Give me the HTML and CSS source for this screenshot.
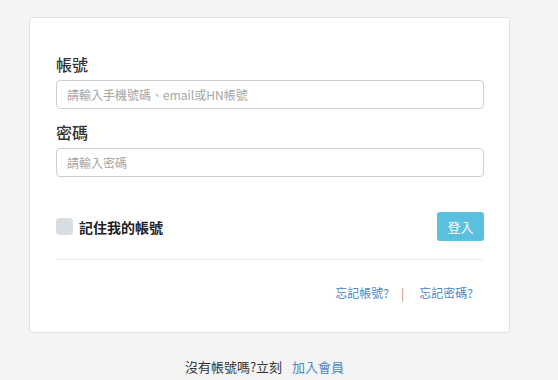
FILE: index.html
```html
<!DOCTYPE html>
<html lang="zh-Hant">
<head>
  <meta charset="UTF-8">
  <meta name="viewport" content="width=device-width, initial-scale=1.0">
  <title>會員登入</title>
  <link rel="stylesheet" href="styles.css">
</head>
<body>
  <div class="wrap">
    <form class="login-card">
      <label class="field-label" for="account">帳號</label>
      <input class="field-input" id="account" type="text" placeholder="請輸入手機號碼、email或HN帳號">

      <label class="field-label" for="password">密碼</label>
      <input class="field-input" id="password" type="password" placeholder="請輸入密碼">

      <div class="remember-row">
        <label class="remember">
          <span class="check-box"></span>
          <span class="remember-text">記住我的帳號</span>
        </label>
        <button class="btn-login" type="button">登入</button>
      </div>

      <div class="divider"></div>

      <div class="forgot">
        <a href="#">忘記帳號?</a>
        <span class="sep">|</span>
        <a href="#">忘記密碼?</a>
      </div>
    </form>

    <p class="signup">沒有帳號嗎?立刻 <a href="#">加入會員</a></p>
  </div>
</body>
</html>
```

FILE: styles.css
```css
body {
  margin: 0;
  padding: 17px 0 0 29px;
  background-color: #f4f4f4;
  font-family: 'Noto Sans CJK TC', 'Liberation Sans', sans-serif;
  color: #333;
}
.wrap {
  width: 481px;
}
.login-card {
  display: flex;
  flex-direction: column;
  background-color: #fff;
  border: 1px solid #e2e2e2;
  border-radius: 4px;
  padding: 35px 25px 30px 26px;
}
.field-label {
  font-size: 16px;
  line-height: 22px;
  font-weight: 500;
  color: #333;
  margin-bottom: 5px;
}
.field-input {
  box-sizing: border-box;
  height: 29px;
  width: 100%;
  margin: 0 0 12px;
  padding: 0 10px;
  border: 1px solid #cfcfcf;
  border-radius: 4px;
  font-family: inherit;
  font-size: 12px;
  color: #555;
  outline: none;
}
.field-input::placeholder {
  color: #a5a5a5;
}
.remember-row {
  display: flex;
  justify-content: space-between;
  align-items: center;
  margin-top: 23px;
}
.remember {
  display: flex;
  align-items: center;
  gap: 6px;
}
.check-box {
  width: 17px;
  height: 17px;
  border-radius: 4px;
  background-color: #d8dde1;
}
.remember-text {
  font-size: 14px;
  font-weight: 700;
  color: #222;
}
.btn-login {
  height: 29px;
  width: 47px;
  border: none;
  border-radius: 3px;
  background-color: #5bc0de;
  color: #fff;
  font-family: inherit;
  font-size: 13px;
  padding: 0;
}
.divider {
  height: 1px;
  background-color: #eee;
  margin-top: 18px;
}
.forgot {
  display: flex;
  justify-content: flex-end;
  align-items: center;
  margin-top: 24px;
  padding-right: 11px;
  font-size: 12px;
  line-height: 18px;
}
.forgot a,
.signup a {
  color: #4d87c5;
  text-decoration: none;
}
.sep {
  color: #b58c6a;
  margin: 0 15px 0 12px;
}
.signup {
  margin: 25px 0 0;
  text-align: center;
  font-size: 13px;
  line-height: 18px;
  color: #333;
  padding-right: 10px;
}
.signup a {
  margin-left: 7px;
}
```
